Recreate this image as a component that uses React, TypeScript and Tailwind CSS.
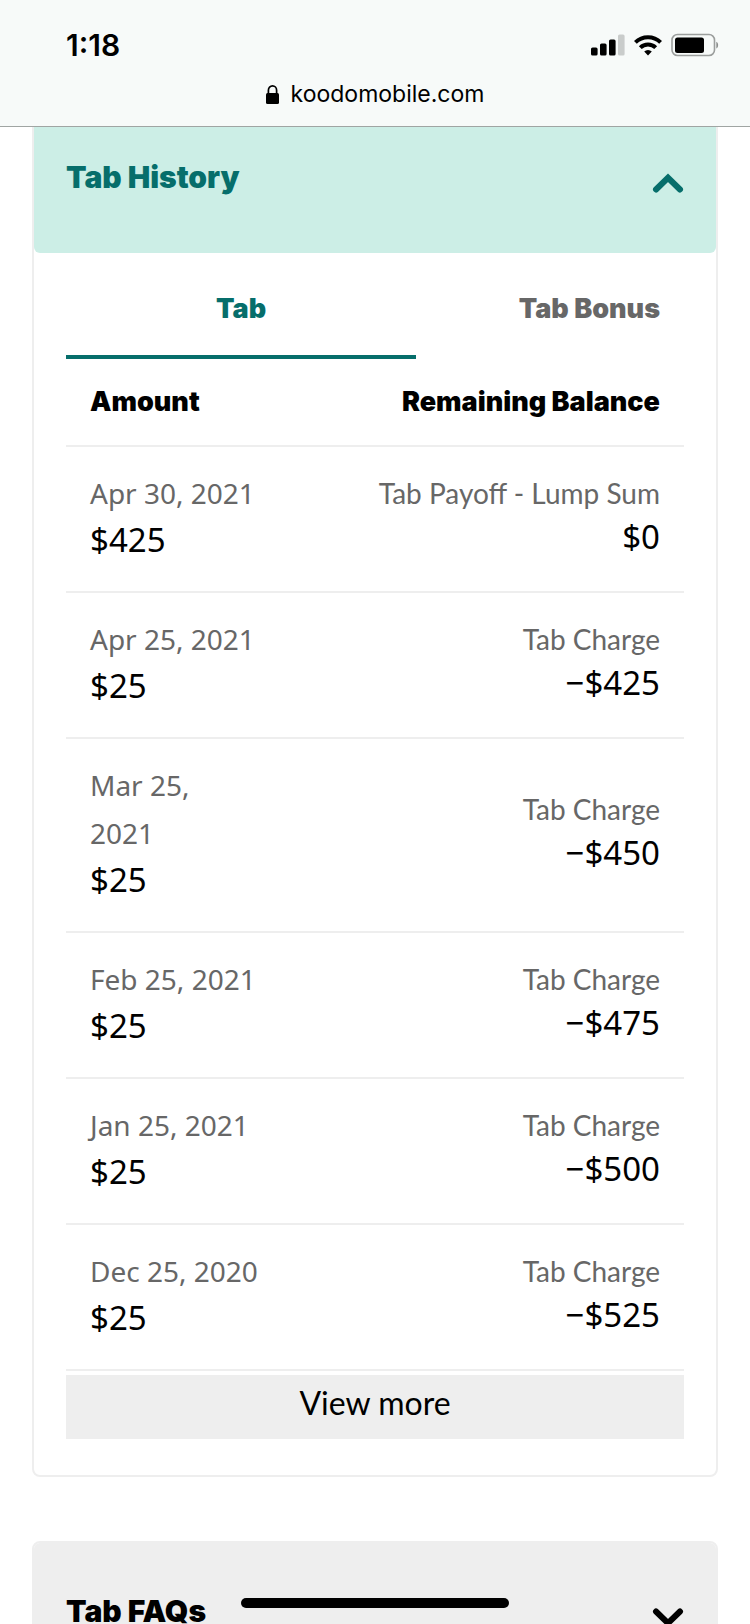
import { useState } from "react";

interface HistoryEntry {
  date: string;
  amount: string;
  type: string;
  balance: string;
}

const entries: HistoryEntry[] = [
  { date: "Apr 30, 2021", amount: "$425", type: "Tab Payoff - Lump Sum", balance: "$0" },
  { date: "Apr 25, 2021", amount: "$25", type: "Tab Charge", balance: "−$425" },
  { date: "Mar 25,\n2021", amount: "$25", type: "Tab Charge", balance: "−$450" },
  { date: "Feb 25, 2021", amount: "$25", type: "Tab Charge", balance: "−$475" },
  { date: "Jan 25, 2021", amount: "$25", type: "Tab Charge", balance: "−$500" },
  { date: "Dec 25, 2020", amount: "$25", type: "Tab Charge", balance: "−$525" },
];

function Chevron({ up }: { up: boolean }) {
  return (
    <svg
      viewBox="0 0 32 28"
      className="w-8 h-7 shrink-0"
      fill="none"
      stroke="currentColor"
      strokeWidth="6"
      strokeLinecap="round"
      strokeLinejoin="miter"
      aria-hidden="true"
    >
      <path d={up ? "M4 20.5 16 8.8 28 20.5" : "M4 8.5 16 20.2 28 8.5"} />
    </svg>
  );
}

function BrowserHeader() {
  return (
    <header className="relative z-10 shrink-0 bg-[#f7faf9] border-b border-[#a0a5a3] pb-[14px] font-['Inter',sans-serif] text-black">
      <div className="h-[76px] pt-[14px] pl-[66px] pr-[31px] flex items-center justify-between">
        <span className="text-[30px] leading-8 font-semibold">1:18</span>
        <div className="flex items-center gap-[9px]">
          {/* Signal */}
          <svg viewBox="0 0 34 22" className="w-[34px] h-[22px]" aria-hidden="true">
            <rect x="0" y="13.5" width="6.6" height="8" rx="1.6" />
            <rect x="9" y="9.5" width="6.6" height="12" rx="1.6" />
            <rect x="18" y="5.5" width="6.6" height="16" rx="1.6" />
            <rect x="27" y="0.5" width="6.6" height="21" rx="1.6" fill="#c9cccb" />
          </svg>
          {/* Wifi */}
          <svg viewBox="0 0 28 22" className="w-7 h-[22px]" fill="none" stroke="#000" strokeWidth="4" aria-hidden="true">
            <path d="M1.4 8.4a17.9 17.9 0 0 1 25.2 0" />
            <path d="M6.3 13.6a10.9 10.9 0 0 1 15.4 0" />
            <path d="M14 21.4 10.2 17.6a5.4 5.4 0 0 1 7.6 0Z" fill="#000" stroke="none" />
          </svg>
          {/* Battery */}
          <svg viewBox="0 0 48 24" className="w-12 h-6" aria-hidden="true">
            <rect x="1" y="1.5" width="42.5" height="21" rx="5.5" fill="none" stroke="#9b9e9d" strokeWidth="1.6" />
            <rect x="4" y="4.5" width="29" height="15.5" rx="2.5" />
            <path d="M45.3 8.8c2.4.6 2.4 6 0 6.6Z" fill="#8b8e8d" />
          </svg>
        </div>
      </div>
      <div className="h-9 flex items-center justify-center gap-3">
        <svg viewBox="0 0 13 19" className="w-[13px] h-[19px]" aria-hidden="true">
          <path d="M2.4 9V5.2a4.1 4.3 0 0 1 8.2 0V9" fill="none" stroke="#000" strokeWidth="1.7" />
          <rect x="0" y="8" width="13" height="11" rx="1.5" />
        </svg>
        <span className="text-[23px] leading-9">koodomobile.com</span>
      </div>
    </header>
  );
}

interface AccordionHeaderProps {
  title: string;
  open: boolean;
  onToggle: () => void;
}

function AccordionHeader({ title, open, onToggle }: AccordionHeaderProps) {
  return (
    <button
      type="button"
      aria-expanded={open}
      onClick={onToggle}
      className={`w-full flex items-end justify-between px-8 pt-12 pb-14 rounded-md text-left ${
        open ? "bg-[#cceee6] text-[#066e6b]" : "bg-[#eeeeee] text-black"
      }`}
    >
      <span className="font-['Inter',sans-serif] text-[30px] leading-10 font-black">{title}</span>
      <Chevron up={open} />
    </button>
  );
}

function HistoryTable() {
  return (
    <table className="w-full border-separate border-spacing-0">
      <thead>
        <tr className="font-['Inter',sans-serif] text-[27px] leading-[44px]">
          <th scope="col" className="h-[88px] pl-6 border-b-2 border-[#eeeeee] text-left font-black">
            Amount
          </th>
          <th scope="col" className="h-[88px] pr-6 border-b-2 border-[#eeeeee] text-right font-black">
            Remaining Balance
          </th>
        </tr>
      </thead>
      <tbody>
        {entries.map((entry) => (
          <tr key={entry.date}>
            <td className="pl-6 pt-[22px] pb-7 border-b-2 border-[#eeeeee]">
              <div className="text-[28px] leading-[48px] text-[#676767] whitespace-pre-line">{entry.date}</div>
              <div className="text-[33px] leading-[46px]">{entry.amount}</div>
            </td>
            <td className="pr-6 pb-2 border-b-2 border-[#eeeeee] text-right align-middle">
              <div className="font-['Lato',sans-serif] text-[28px] leading-[44px] text-[#676767]">{entry.type}</div>
              <div className="text-[33px] leading-[44px]">{entry.balance}</div>
            </td>
          </tr>
        ))}
      </tbody>
    </table>
  );
}

export default function App() {
  const [historyOpen, setHistoryOpen] = useState(true);
  const [faqsOpen, setFaqsOpen] = useState(false);
  const [tab, setTab] = useState<"tab" | "bonus">("tab");

  return (
    <div className="relative h-screen overflow-hidden flex flex-col bg-white text-black font-['Noto_Sans',sans-serif]">
      <BrowserHeader />

      {/* Page is scrolled a little under the browser bar */}
      <main className="-mt-5 px-8">
        <section className="border-2 border-[#eeeeee] rounded-lg">
          <AccordionHeader title="Tab History" open={historyOpen} onToggle={() => setHistoryOpen(!historyOpen)} />
          {historyOpen && (
            <div className="px-8 pb-9">
              <div
                role="tablist"
                className="grid grid-cols-[17fr_13fr] font-['Inter',sans-serif] text-[27px] leading-[44px] font-black"
              >
                <button
                  type="button"
                  role="tab"
                  aria-selected={tab === "tab"}
                  onClick={() => setTab("tab")}
                  className={`pt-[34px] pb-6 border-b-4 text-center ${
                    tab === "tab" ? "border-[#066e6b] text-[#066e6b]" : "border-transparent text-[#676767]"
                  }`}
                >
                  Tab
                </button>
                <button
                  type="button"
                  role="tab"
                  aria-selected={tab === "bonus"}
                  onClick={() => setTab("bonus")}
                  className={`pt-[34px] pb-6 pr-6 border-b-4 text-right ${
                    tab === "bonus" ? "border-[#066e6b] text-[#066e6b]" : "border-transparent text-[#676767]"
                  }`}
                >
                  Tab Bonus
                </button>
              </div>
              <HistoryTable />
              <button
                type="button"
                className="mt-1 w-full h-16 pb-2 bg-[#eeeeee] font-['Lato',sans-serif] text-[32px] leading-10 text-center"
              >
                View more
              </button>
            </div>
          )}
        </section>

        <section className="mt-16 border-2 border-[#eeeeee] rounded-lg">
          <AccordionHeader title="Tab FAQs" open={faqsOpen} onToggle={() => setFaqsOpen(!faqsOpen)} />
        </section>
      </main>

      {/* Home indicator */}
      <div className="absolute bottom-4 left-1/2 -translate-x-1/2 w-[268px] h-[10px] rounded-full bg-black" />
    </div>
  );
}
